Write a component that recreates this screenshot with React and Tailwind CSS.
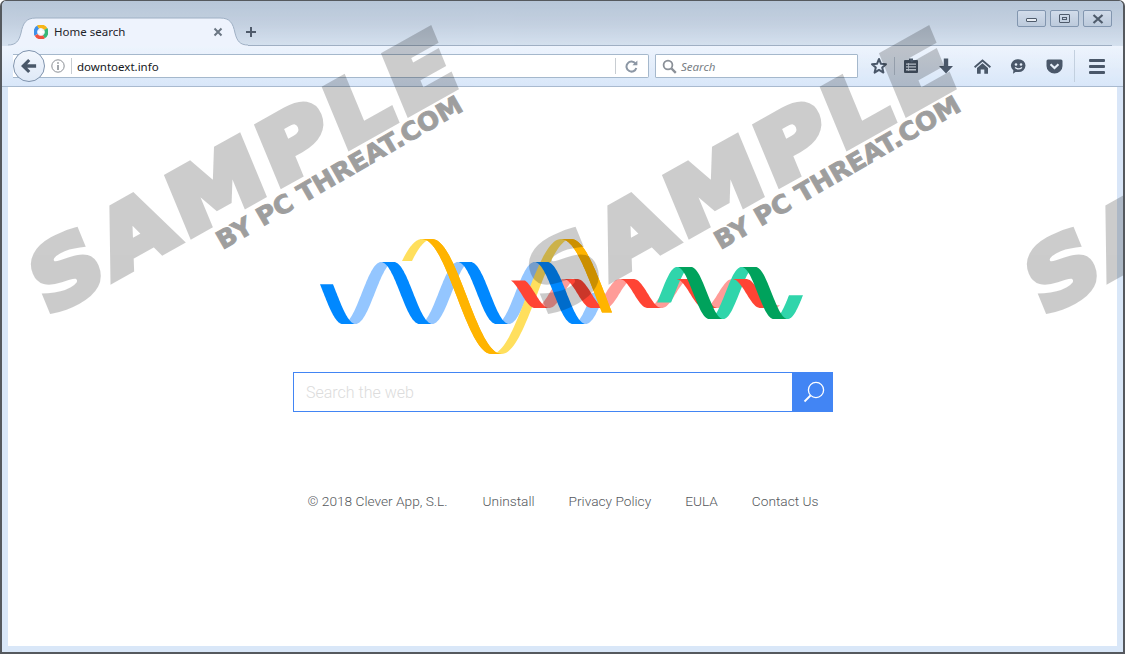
import React from "react";

function wavePoly(crest, period, a, c, w, x1, x2) {
  const y = (x) => c - a * Math.cos((2 * Math.PI * (x - crest)) / period);
  const pts = [];
  const n = 40;
  for (let i = 0; i <= n; i++) {
    const x = x1 + ((x2 - x1) * i) / n;
    pts.push(`${x.toFixed(1)},${y(x).toFixed(1)}`);
  }
  for (let i = n; i >= 0; i--) {
    const x = x1 + ((x2 - x1) * i) / n;
    pts.push(`${(x + w).toFixed(1)},${y(x).toFixed(1)}`);
  }
  return pts.join(" ");
}

function Ribbon({ crest, period, a, c, w, start, end, color, kind }) {
  const out = [];
  const half = period / 2;
  let k = Math.floor((start - crest) / half) - 1;
  for (; crest + k * half < end; k++) {
    const s = crest + k * half;
    const e = s + half;
    const falling = ((k % 2) + 2) % 2 === 0;
    if ((kind === "down") !== falling) continue;
    const x1 = Math.max(s, start);
    const x2 = Math.min(e, end);
    if (x2 <= x1) continue;
    out.push(<polygon key={k} points={wavePoly(crest, period, a, c, w, x1, x2)} fill={color} />);
  }
  return <g>{out}</g>;
}

const blue = { crest: 381, period: 76.7, a: 31, c: 293, w: 13, start: 320, end: 592 };
const yellow = { crest: 422, period: 139, a: 57.5, c: 296.5, w: 10, start: 402, end: 602 };
const red = { crest: 507, period: 56.3, a: 14.5, c: 293.5, w: 14, start: 511, end: 766 };
const green = { crest: 677, period: 64.5, a: 26, c: 293, w: 14, start: 657, end: 789 };

function Logo() {
  return (
    <svg width="540" height="125" viewBox="293 235 540 125" className="block">
      <Ribbon {...blue} kind="up" color="#94c6ff" />
      <Ribbon {...red} kind="up" color="#ff9c98" />
      <Ribbon {...yellow} kind="up" color="#ffdf5d" />
      <Ribbon {...yellow} kind="down" color="#ffb400" />
      <Ribbon {...green} kind="up" color="#30d5ab" />
      <Ribbon {...red} kind="down" color="#ff4434" />
      <Ribbon {...blue} kind="down" color="#0088ff" />
      <Ribbon {...yellow} kind="down" color="#ffb400" />
      <Ribbon {...green} kind="down" color="#00a25c" />
    </svg>
  );
}

function Watermark({ x }) {
  return (
    <div className="absolute top-[-1px] h-0 w-0" style={{ left: x }}>
      <div
        className="absolute left-[55px] top-[235px] origin-bottom-left -rotate-[29.3deg] -skew-x-6 scale-x-[1.14] whitespace-nowrap text-[86px] font-bold leading-[100px] tracking-[5px] text-black opacity-20 [-webkit-text-stroke:7px_black]"
        style={{ fontFamily: '"DejaVu Sans", sans-serif' }}
      >
        SAMPLE
      </div>
      <div
        className="absolute left-[226px] top-[226px] origin-bottom-left -rotate-[30deg] scale-x-[1.04] whitespace-nowrap text-[25px] font-bold leading-[30px] text-black opacity-[0.38] [-webkit-text-stroke:1px_black]"
        style={{ fontFamily: '"DejaVu Sans", sans-serif' }}
      >
        BY PC THREAT.COM
      </div>
    </div>
  );
}

const icon = "#4a5869";

function WinBtn({ children }) {
  return (
    <div className="flex h-[17px] w-[29px] items-center justify-center rounded-[2px] border border-[#8396b0] bg-gradient-to-b from-[#d2dcea] to-[#bccadc]">
      {children}
    </div>
  );
}

export default function App() {
  return (
    <div
      className="relative flex h-[654px] w-[1125px] flex-col overflow-hidden rounded-t-[6px] border-x-2 border-b-2 border-t border-[#55595e] bg-[#d9e7f8]"
      style={{ fontFamily: '"Noto Sans", sans-serif' }}
    >
      {/* title + tab strip */}
      <div className="flex h-[45px] shrink-0 items-start bg-gradient-to-b from-[#b7c6d8] via-[#c3d0e0] to-[#d5e1ef] pl-[6px] pr-[11px]">
        <div className="relative z-10 mt-[16px] h-[29px] w-[240px] shrink-0">
          <svg width="240" height="29" viewBox="0 0 240 29" className="absolute inset-0">
            <path
              d="M0 28 C8 28 11 24 13 16 C15 6 18 1 28 1 L212 1 C222 1 225 6 227 16 C229 24 232 28 240 28 L240 29 L0 29 Z"
              fill="#eef3fd"
            />
            <path
              d="M0 28 C8 28 11 24 13 16 C15 6 18 1 28 1 L212 1 C222 1 225 6 227 16 C229 24 232 28 240 28"
              fill="none"
              stroke="#9fb0c4"
            />
          </svg>
          <div className="relative flex h-full items-center pl-[26px]">
            <svg width="14" height="14" viewBox="0 0 14 14" fill="none" strokeWidth="3.6">
              <path d="M2.2 9.8 A5.3 5.3 0 0 1 4.2 2.2" stroke="#3f8fe8" />
              <path d="M4 2 A5.6 5.6 0 0 1 11.8 4.2" stroke="#f7b619" />
              <path d="M11.8 4 A5.6 5.6 0 0 1 9.8 11.8" stroke="#37b779" />
              <path d="M10 11.8 A5.6 5.6 0 0 1 2.2 9.8" stroke="#ef5240" />
              <path d="M7 4.2 V9.8 M4.2 7 H9.8" stroke="#fff" strokeWidth="1.8" />
            </svg>
            <span className="ml-[6px] text-[11.5px] text-[#1f2329]">Home search</span>
            <svg width="10" height="10" viewBox="0 0 10 10" className="ml-[88px]" stroke="#6b7683" strokeWidth="2">
              <path d="M1.5 1.5 L8.5 8.5 M8.5 1.5 L1.5 8.5" />
            </svg>
          </div>
        </div>
        <div className="flex h-full flex-1 items-start border-b border-[#9fb0c4]">
          <svg width="12" height="12" viewBox="0 0 12 12" className="ml-[-3px] mt-[25px]" stroke="#4f5c6c" strokeWidth="2">
            <path d="M6 1 V11 M1 6 H11" />
          </svg>
          <div className="ml-auto mt-[9px] flex gap-[4px]">
            <WinBtn>
              <div className="mt-[2px] h-[4px] w-[11px] rounded-[1px] border border-[#4f5c6c] bg-[#e9eef5]" />
            </WinBtn>
            <WinBtn>
              <div className="flex h-[9px] w-[11px] items-center justify-center rounded-[1px] border border-[#4f5c6c]">
                <div className="h-[3px] w-[5px] border border-[#4f5c6c]" />
              </div>
            </WinBtn>
            <WinBtn>
              <svg width="12" height="10" viewBox="0 0 12 10" stroke="#4f5c6c" strokeWidth="2.2">
                <path d="M1.5 1 L10.5 9 M10.5 1 L1.5 9" />
              </svg>
            </WinBtn>
          </div>
        </div>
      </div>

      {/* toolbar */}
      <div className="flex h-[41px] shrink-0 items-center border-b border-[#a9bbcf] bg-gradient-to-b from-[#eef4fd] to-[#d9e7f9] pl-[11px] pr-[9px]">
        <div className="flex h-[24px] w-[636px] items-center rounded-r-[2px] border border-l-0 border-[#a6b8cc] bg-white">
          <div className="relative z-10 flex h-[32px] w-[32px] shrink-0 items-center justify-center rounded-full border border-[#7f93ad] bg-gradient-to-b from-[#f3f7fd] to-[#dfe9f7]">
            <svg width="18" height="16" viewBox="0 0 20 18" fill={icon}>
              <path d="M9 1 L1 9 L9 17 L11.5 14.5 L8 11 H18 V7 H8 L11.5 3.5 Z" />
            </svg>
          </div>
          <svg width="14" height="14" viewBox="0 0 14 14" className="ml-[6px] shrink-0" fill="none" stroke="#8b8f95">
            <circle cx="7" cy="7" r="6.2" />
            <path d="M7 3.2 V4.8 M7 6 V11" strokeWidth="1.6" />
          </svg>
          <div className="ml-[6px] h-[16px] w-px bg-[#c8cdd3]" />
          <span className="ml-[5px] pt-px text-[11.5px] text-[#15181c]">downtoext.info</span>
          <div className="ml-auto h-[16px] w-px bg-[#c8cdd3]" />
          <svg width="13" height="13" viewBox="0 0 13 13" className="ml-[9px] mr-[10px]" fill="none">
            <path d="M10.5 3.6 A5 5 0 1 0 11.3 8" stroke="#8d98a5" strokeWidth="2" />
            <path d="M7.4 5.2 H12.4 V0.6 Z" fill="#8d98a5" />
          </svg>
        </div>
        <div className="ml-[6px] flex h-[24px] w-[203px] items-center rounded-[1px] border border-[#a6b8cc] bg-white pl-[6px]">
          <svg width="15" height="15" viewBox="0 0 15 15" fill="none" stroke="#8b9098">
            <circle cx="6" cy="6" r="4.4" strokeWidth="1.8" />
            <path d="M9.5 9.5 L13.8 13.8" strokeWidth="2.4" />
          </svg>
          <span className="ml-[4px] pt-px text-[11.5px] italic text-[#7a7f86]">Search</span>
        </div>
        <svg width="18" height="18" viewBox="0 0 18 18" className="ml-[12px]" fill="none" stroke={icon} strokeWidth="2">
          <path d="M9 2 L11 6.8 L16 7.2 L12.2 10.5 L13.4 15.6 L9 12.9 L4.6 15.6 L5.8 10.5 L2 7.2 L7 6.8 Z" strokeLinejoin="round" />
        </svg>
        <div className="ml-[6px] h-[18px] w-px bg-[#b9c6d6]" />
        <svg width="16" height="16" viewBox="0 0 16 16" className="ml-[8px]" fill={icon}>
          <path d="M6 0.5 H10 V2 H14 A1 1 0 0 1 15 3 V14 A1 1 0 0 1 14 15 H2 A1 1 0 0 1 1 14 V3 A1 1 0 0 1 2 2 H6 Z" />
          <path d="M3 5.5 H13 V6.8 H3 Z M3 8.3 H13 V9.6 H3 Z M3 11.1 H13 V12.4 H3 Z M5.2 5 H6 V13 H5.2 Z" fill="#dfe9f6" />
        </svg>
        <svg width="16" height="16" viewBox="0 0 16 16" className="ml-[19px]" fill={icon}>
          <path d="M5.8 0.5 H10.2 V8 H15 L8 15.5 L1 8 H5.8 Z" />
        </svg>
        <svg width="17" height="15" viewBox="0 0 17 15" className="ml-[20px]" fill={icon}>
          <path d="M8.5 0.3 L17 7.5 L15.8 8.9 L8.5 2.8 L1.2 8.9 L0 7.5 Z" />
          <path d="M8.5 4.3 L14 9 V14.7 H10.3 V10.5 H6.7 V14.7 H3 V9 Z" />
        </svg>
        <svg width="17" height="17" viewBox="0 0 17 17" className="ml-[19px]">
          <path d="M8.5 1.2 A7 6.4 0 0 1 8.5 14 L5.5 14 L3 15.8 L3.4 12.4 A7 6.4 0 0 1 8.5 1.2 Z" fill={icon} />
          <circle cx="6" cy="6.5" r="1.3" fill="#e6eef9" />
          <circle cx="11" cy="6.5" r="1.3" fill="#e6eef9" />
          <path d="M5 9.5 Q8.5 12.2 12 9.5" fill="none" stroke="#e6eef9" strokeWidth="1.3" />
        </svg>
        <svg width="17" height="15" viewBox="0 0 17 15" className="ml-[19px]">
          <path d="M2 0.5 H15 A1.5 1.5 0 0 1 16.5 2 V7 A8 7.5 0 0 1 0.5 7 V2 A1.5 1.5 0 0 1 2 0.5 Z" fill={icon} />
          <path d="M4.5 5.2 L8.5 9 L12.5 5.2" fill="none" stroke="#e6eef9" strokeWidth="2.2" />
        </svg>
        <div className="ml-[11px] h-[32px] w-px bg-[#c3d0df]" />
        <div className="ml-[14px] flex w-[16px] flex-col gap-[3px]">
          <div className="h-[3px] rounded-[1px] bg-[#4a5869]" />
          <div className="h-[3px] rounded-[1px] bg-[#4a5869]" />
          <div className="h-[3px] rounded-[1px] bg-[#4a5869]" />
        </div>
      </div>

      {/* page */}
      <div className="mx-[6px] mb-[6px] flex min-h-0 flex-1 flex-col items-center bg-white pl-px" style={{ fontFamily: "Roboto, sans-serif" }}>
        <div className="mt-[148px]">
          <Logo />
        </div>
        <div className="mt-[12px] flex h-[40px] w-[540px]">
          <div className="flex flex-1 items-center border border-[#4285f4] pl-[12px] pt-px text-[16px] font-light text-[#dcdcdc]">
            Search the web
          </div>
          <div className="flex w-[40px] items-center justify-center bg-[#4285f4]">
            <svg width="24" height="24" viewBox="0 0 24 24" fill="none" stroke="#fff" className="ml-px">
              <circle cx="14" cy="10" r="7.6" strokeWidth="1.3" />
              <path d="M8.5 15.5 L2.5 21.5" strokeWidth="1.8" />
            </svg>
          </div>
        </div>
        <div className="mt-[81px] flex items-center whitespace-nowrap text-[13.7px] font-light leading-[16px] text-[#55585c]">
          <span>© 2018 Clever App, S.L.</span>
          <span className="ml-[35px]">Uninstall</span>
          <span className="ml-[34px]">Privacy Policy</span>
          <span className="ml-[34px]">EULA</span>
          <span className="ml-[34px]">Contact Us</span>
        </div>
      </div>

      {/* watermark overlay */}
      <Watermark x={-2} />
      <Watermark x={496} />
      <Watermark x={994} />
    </div>
  );
}
